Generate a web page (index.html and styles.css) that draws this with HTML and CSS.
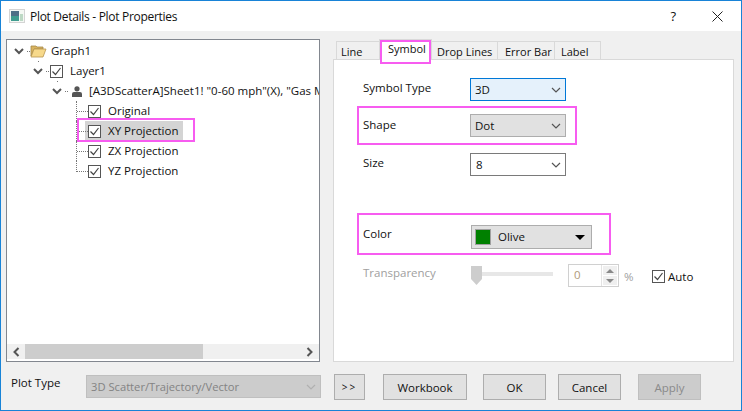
FILE: index.html
```html
<!DOCTYPE html>
<html lang="en">
<head>
    <meta charset="UTF-8">
    <title>Plot Details - Plot Properties</title>
    <link rel="stylesheet" href="styles.css">
</head>
<body>
    <svg class="sprites" width="0" height="0">
        <symbol id="chevron" viewBox="0 0 10 6"><path d="M1 1l4 4 4-4" fill="none" stroke="currentColor" stroke-width="1.2"/></symbol>
        <symbol id="tree-chevron" viewBox="0 0 10 7"><path d="M1 1l4 4 4-4" fill="none" stroke="currentColor" stroke-width="2"/></symbol>
        <symbol id="check" viewBox="0 0 13 13"><rect x=".5" y=".5" width="12" height="12" fill="#fff" stroke="#555"/><path d="M2.500 6.500l3 3 5-6.500" fill="none" stroke="#444" stroke-width="1.2"/></symbol>
    </svg>

    <div class="window">
        <header class="titlebar">
            <svg class="app-icon" width="16" height="14" viewBox="0 0 16 14">
                <rect width="16" height="14" fill="#d4d4d4"/>
                <rect x="1" y="1" width="14" height="12" fill="#f4f8f4"/>
                <rect x="2" y="2" width="8" height="5" fill="#4d6f86"/>
                <rect x="2" y="7" width="8" height="5" fill="#3f9c8f"/>
                <rect x="11" y="5" width="3" height="7" fill="#bcd8c4"/>
            </svg>
            <span class="title">Plot Details - Plot Properties</span>
            <span class="help">?</span>
            <svg class="close" width="11" height="11" viewBox="0 0 11 11"><path d="M.5.5l10 10M10.500.5l-10 10" stroke="#222" fill="none"/></svg>
        </header>

        <div class="main">
            <div class="tree-pane">
                <ul class="tree">
                    <li class="node level-0">
                        <svg class="twist"><use href="#tree-chevron"/></svg>
                        <span class="stub"></span>
                        <svg class="folder" width="17" height="14" viewBox="0 0 17 14">
                            <path d="M1 2h5l1 1h6v2H4L1 12z" fill="#d9b45f" stroke="#a5894a" stroke-width=".8"/>
                            <path d="M1 13l3-8h12l-3 8z" fill="#f7d98b" stroke="#b7964f" stroke-width=".8"/>
                        </svg>
                        <span class="node-text">Graph1</span>
                    </li>
                    <li class="node level-1">
                        <svg class="twist"><use href="#tree-chevron"/></svg>
                        <span class="stub"></span>
                        <svg class="box"><use href="#check"/></svg>
                        <span class="node-text">Layer1</span>
                    </li>
                    <li class="node level-2">
                        <svg class="twist"><use href="#tree-chevron"/></svg>
                        <span class="stub"></span>
                        <svg class="person" width="10" height="11" viewBox="0 0 10 11">
                            <circle cx="5" cy="2.800" r="2.600" fill="#555"/>
                            <path d="M0 11V8q0-2 2-2h6q2 0 2 2v3z" fill="#555"/>
                        </svg>
                        <span class="node-text">[A3DScatterA]Sheet1! "0-60 mph"(X), "Gas M</span>
                    </li>
                    <li class="node leaf">
                        <span class="guide"></span>
                        <svg class="box"><use href="#check"/></svg>
                        <span class="node-text">Original</span>
                    </li>
                    <li class="node leaf marked-node">
                        <span class="guide"></span>
                        <div class="selected">
                            <svg class="box"><use href="#check"/></svg>
                            <span class="node-text">XY Projection</span>
                        </div>
                    </li>
                    <li class="node leaf">
                        <span class="guide"></span>
                        <svg class="box"><use href="#check"/></svg>
                        <span class="node-text">ZX Projection</span>
                    </li>
                    <li class="node leaf last">
                        <span class="guide"></span>
                        <svg class="box"><use href="#check"/></svg>
                        <span class="node-text">YZ Projection</span>
                    </li>
                </ul>
                <div class="hscroll">
                    <svg class="arrow" width="7" height="10" viewBox="0 0 7 10"><path d="M5.500 1l-4 4 4 4" fill="none" stroke="#555" stroke-width="2"/></svg>
                    <div class="track"><div class="thumb"></div></div>
                    <svg class="arrow" width="7" height="10" viewBox="0 0 7 10"><path d="M1.500 1l4 4-4 4" fill="none" stroke="#555" stroke-width="2"/></svg>
                </div>
            </div>

            <div class="tab-pane">
                <div class="tabs">
                    <span class="tab tab-line">Line</span>
                    <span class="tab tab-active">Symbol</span>
                    <span class="tab tab-drop">Drop Lines</span>
                    <span class="tab tab-error">Error Bar</span>
                    <span class="tab tab-label">Label</span>
                </div>
                <div class="tab-body">
                    <div class="row row-type">
                        <span class="label">Symbol Type</span>
                        <div class="combo combo-focus">3D<svg class="chev"><use href="#chevron"/></svg></div>
                    </div>
                    <div class="row row-shape marked">
                        <span class="label">Shape</span>
                        <div class="combo combo-grey">Dot<svg class="chev"><use href="#chevron"/></svg></div>
                    </div>
                    <div class="row row-size">
                        <span class="label">Size</span>
                        <div class="combo combo-size">8<svg class="chev"><use href="#chevron"/></svg></div>
                    </div>
                    <div class="row row-color marked">
                        <span class="label">Color</span>
                        <div class="color-combo">
                            <span class="swatch"></span>
                            <span class="color-name">Olive</span>
                            <span class="caret"></span>
                        </div>
                    </div>
                    <div class="row row-trans">
                        <span class="label">Transparency</span>
                        <div class="slider">
                            <svg class="slider-thumb" width="11" height="19" viewBox="0 0 11 19"><path d="M0 0h11v13l-5.500 6L0 13z" fill="#cdcdcd"/></svg>
                            <span class="slider-track"></span>
                        </div>
                        <div class="spin">
                            <span class="spin-value">0</span>
                            <div class="spin-btns">
                                <span class="spin-btn"><i class="up"></i></span>
                                <span class="spin-btn"><i class="down"></i></span>
                            </div>
                        </div>
                        <span class="percent">%</span>
                        <svg class="box auto-box"><use href="#check"/></svg>
                        <span class="auto-text">Auto</span>
                    </div>
                </div>
            </div>
        </div>

        <footer class="bottom">
            <span class="plot-label">Plot Type</span>
            <div class="combo combo-off">3D Scatter/Trajectory/Vector<svg class="chev"><use href="#chevron"/></svg></div>
            <button class="btn btn-more" type="button">&gt;&gt;</button>
            <button class="btn btn-workbook" type="button">Workbook</button>
            <button class="btn btn-ok" type="button">OK</button>
            <button class="btn btn-cancel" type="button">Cancel</button>
            <button class="btn btn-apply" type="button" disabled>Apply</button>
        </footer>
    </div>
</body>
</html>
```

FILE: styles.css
```css
*, *::before, *::after {
    box-sizing: border-box;
}

body {
    margin: 0;
    font-family: 'Open Sans', 'Noto Sans', sans-serif;
    font-size: 11.5px;
    color: #111;
}

svg {
    flex: none;
}

.sprites {
    position: absolute;
}

.window {
    width: 742px;
    height: 411px;
    background-color: #f0f0f0;
    border: 1px solid #1883d7;
    overflow: hidden;
}

/* title bar */
.titlebar {
    display: flex;
    align-items: center;
    height: 30px;
    background-color: #fff;
    padding-left: 8px;
}

.app-icon {
    margin-right: 5px;
}

.title {
    font-size: 12px;
    letter-spacing: -0.3px;
}

.help {
    margin-left: auto;
    font-size: 13px;
    margin-right: 36px;
}

.close {
    margin-right: 18px;
}

.main {
    display: flex;
    padding: 8px 0 0 5px;
}

/* tree */
.tree-pane {
    display: flex;
    flex-direction: column;
    width: 314px;
    height: 323px;
    background-color: #fff;
    border: 1px solid #82878f;
}

.tree {
    flex: 1;
    list-style: none;
    margin: 0;
    padding: 1px 0 0;
    overflow: hidden;
}

.node {
    position: relative;
    display: flex;
    align-items: center;
    height: 20px;
    white-space: nowrap;
}

.twist {
    width: 10px;
    height: 7px;
    color: #555;
}

.stub {
    width: 3px;
    margin-left: 3px;
    flex: none;
    border-bottom: 1px dotted #777;
}

.level-0 {
    padding-left: 7px;
}

.level-0 .node-text {
    margin-left: 4px;
}

.level-1 {
    padding-left: 26px;
}

.level-1 .stub {
    margin-right: 1px;
}

.level-1 .node-text {
    margin-left: 7px;
}

.level-2 {
    padding-left: 45px;
}

.level-2 .stub {
    margin-right: 4px;
}

.level-2 .node-text {
    margin-left: 7px;
}

/* single dots that join a node to its parent */
.level-1::before,
.level-2::before {
    content: '';
    position: absolute;
    top: 0;
    width: 1px;
    height: 1px;
    background-color: #777;
}

.level-1::before {
    left: 31px;
}

.level-2::before {
    left: 50px;
}

.box {
    width: 13px;
    height: 13px;
}

.node-text {
    flex: none;
    line-height: 20px;
}

.leaf {
    padding-left: 69px;
}

.leaf .node-text {
    margin-left: 7px;
}

.guide {
    position: relative;
    width: 12px;
    height: 100%;
    flex: none;
    border-left: 1px dotted #777;
}

.guide::after {
    content: '';
    position: absolute;
    left: 0;
    right: 0;
    top: 10px;
    border-bottom: 1px dotted #777;
}

.last .guide {
    border-left: none;
}

.last .guide::before {
    content: '';
    position: absolute;
    left: 0;
    top: 0;
    height: 11px;
    border-left: 1px dotted #777;
}

.selected {
    display: flex;
    align-items: center;
    width: 98px;
    height: 100%;
    margin-left: -3px;
    padding-left: 3px;
    background-color: #d4d4d4;
}

.marked-node::after {
    content: '';
    position: absolute;
    left: 70px;
    top: -3px;
    width: 118px;
    height: 24px;
    border: 2px solid #f75cf0;
}

.hscroll {
    display: flex;
    align-items: center;
    height: 15px;
    background-color: #f0f0f0;
    margin-bottom: 2px;
}

.arrow {
    margin: 0 5px 0 6px;
}

.hscroll .arrow:last-child {
    margin: 0 6px 0 6px;
}

.track {
    flex: 1;
    height: 15px;
}

.thumb {
    width: 178px;
    height: 100%;
    background-color: #cdcdcd;
}

/* tabs */
.tab-pane {
    width: 401px;
    height: 321px;
    margin: 2px 0 0 13px;
    display: flex;
    flex-direction: column;
}

.tabs {
    display: flex;
    height: 18px;
    padding-left: 3px;
    font-size: 11px;
}

.tab {
    position: relative;
    display: flex;
    align-items: center;
    height: 19px;
    border: 1px solid #d9d9d9;
    border-bottom: none;
    border-left-width: 0;
    padding-left: 5px;
}

.tab-line {
    width: 44px;
    border-left-width: 1px;
    padding-left: 4px;
}

.tab-active {
    width: 53px;
    height: 21px;
    margin-top: -2px;
    margin-left: -1px;
    background-color: #fff;
    border-left-width: 1px;
    padding: 0 0 3px 8px;
    z-index: 1;
}

.tab-active::after {
    content: '';
    position: absolute;
    left: 0;
    top: 0;
    width: 51px;
    height: 24px;
    border: 2px solid #f75cf0;
}

.tab-drop {
    width: 66px;
    padding-left: 5px;
}

.tab-error {
    width: 57px;
    padding-left: 7px;
}

.tab-label {
    width: 46px;
    padding-left: 6px;
}

.tab-body {
    flex: 1;
    background-color: #fff;
    border: 1px solid #d9d9d9;
    padding: 18px 0 0 29px;
}

.row {
    position: relative;
    display: flex;
    align-items: flex-start;
}

.label {
    width: 107px;
    line-height: 20px;
    flex: none;
}

.row-shape {
    margin-top: 13px;
    width: 203px;
}

.row-shape .label {
    line-height: 22px;
}

.row-size {
    margin-top: 16px;
}

.row-color {
    margin-top: 49px;
    width: 229px;
}

.row-color .label {
    width: 108px;
    line-height: 17px;
}

.row-trans {
    margin-top: 15px;
    color: #a0a0a0;
}

.row-trans .label {
    width: 108px;
    line-height: 18px;
}

.marked::after {
    content: '';
    position: absolute;
    border: 2px solid #f75cf0;
}

.row-shape::after {
    left: -6px;
    right: -11px;
    top: -8px;
    bottom: -8px;
}

.row-color::after {
    left: -6px;
    right: -19px;
    top: -12px;
    bottom: -6px;
}

/* combos */
.combo {
    position: relative;
    display: flex;
    align-items: center;
    width: 96px;
    height: 23px;
    padding-left: 4px;
    border: 1px solid #7a7a7a;
    background-color: #fff;
    color: #111;
}

.chev {
    position: absolute;
    right: 4px;
    top: 8px;
    width: 10px;
    height: 6px;
    color: #555;
}

.combo-focus {
    border-color: #0078d7;
    background-color: #e5f1fb;
}

.combo-grey {
    border-color: #adadad;
    background-color: #e1e1e1;
}

.combo-size {
    padding-left: 5px;
}

.combo-off {
    width: 235px;
    background-color: #cccccc;
    border-color: #bfbfbf;
    color: #838383;
    font-size: 11.2px;
}

.combo-off .chev {
    color: #b0b0b0;
}

.color-combo {
    display: flex;
    align-items: center;
    width: 121px;
    height: 24px;
    padding-left: 3px;
    background-color: #e1e1e1;
    border: 1px solid #adadad;
}

.swatch {
    width: 16px;
    height: 16px;
    margin-right: 7px;
    background-color: #008000;
    border: 1px solid #a0a0a0;
}

.color-name {
    padding-bottom: 1px;
}

.caret {
    margin-left: auto;
    margin-right: 6px;
    border-top: 5px solid #000;
    border-left: 5px solid transparent;
    border-right: 5px solid transparent;
}

/* transparency row */
.slider {
    display: flex;
    width: 82px;
    height: 23px;
    padding-top: 2px;
    flex: none;
}

.slider-track {
    width: 71px;
    height: 4px;
    margin-top: 6px;
    background-color: #e7e7e7;
}

.spin {
    display: flex;
    width: 51px;
    height: 23px;
    margin-left: 15px;
    background-color: #fff;
    border: 1px solid #d0d0d0;
}

.spin-value {
    flex: 1;
    padding-left: 5px;
    line-height: 20px;
    color: #b09a7a;
}

.spin-btns {
    display: flex;
    flex-direction: column;
    gap: 1px;
    width: 17px;
    padding: 1px;
    border-left: 1px solid #e3e3e3;
}

.spin-btn {
    flex: 1;
    display: flex;
    align-items: center;
    justify-content: center;
    background-color: #efefef;
}

.up {
    border-bottom: 4px solid #888;
    border-left: 4px solid transparent;
    border-right: 4px solid transparent;
}

.down {
    border-top: 4px solid #888;
    border-left: 4px solid transparent;
    border-right: 4px solid transparent;
}

.percent {
    margin-left: 5px;
    line-height: 26px;
    width: 28px;
}

.auto-box {
    margin-top: 6px;
}

.auto-text {
    margin-left: 3px;
    line-height: 25px;
    color: #111;
}

/* bottom row */
.bottom {
    display: flex;
    align-items: flex-start;
    padding: 12px 0 0 10px;
}

.plot-label {
    width: 75px;
    line-height: 17px;
}

.bottom .combo-off {
    margin-top: 1px;
    padding-left: 4px;
}

.btn {
    height: 26px;
    padding: 0;
    font: inherit;
    color: #111;
    background-color: #e1e1e1;
    border: 1px solid #adadad;
}

.btn-more {
    width: 31px;
    margin-left: 13px;
    font-size: 10px;
    letter-spacing: 2px;
}

.btn-workbook {
    width: 84px;
    margin-left: 18px;
}

.btn-ok {
    width: 63px;
    margin-left: 16px;
}

.btn-cancel {
    width: 63px;
    margin-left: 12px;
}

.btn-apply {
    width: 63px;
    margin-left: 17px;
    background-color: #cccccc;
    border-color: #bfbfbf;
    color: #8a8a8a;
}
```
